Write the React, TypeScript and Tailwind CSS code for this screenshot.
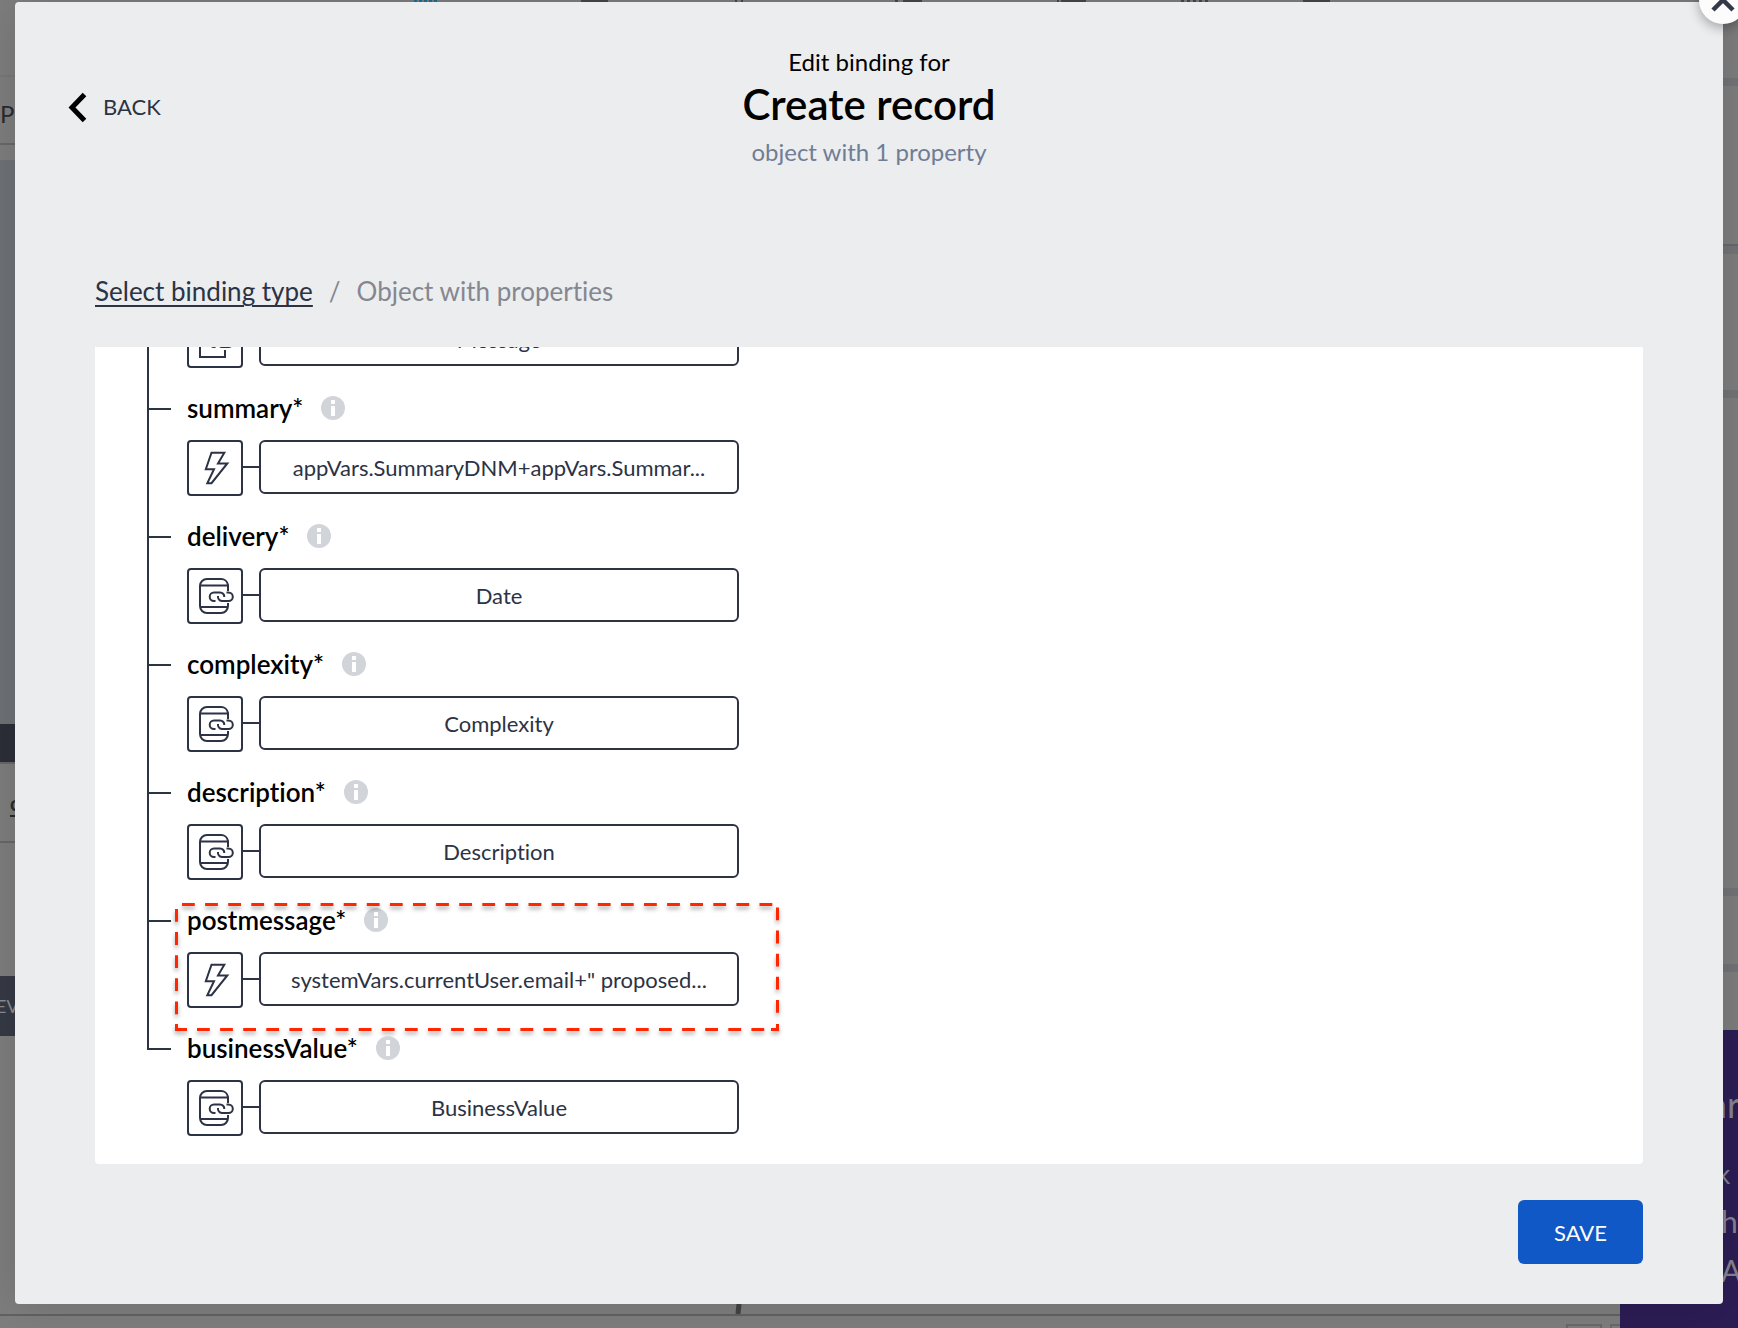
import React from "react";

type Kind = "formula" | "page" | "param";
type Row = { name: string; value: string; kind: Kind; highlighted?: boolean; continued?: boolean };

const rows: Row[] = [
  { name: "message", value: "Message", kind: "param", continued: true },
  { name: "summary", value: "appVars.SummaryDNM+appVars.Summar...", kind: "formula" },
  { name: "delivery", value: "Date", kind: "page" },
  { name: "complexity", value: "Complexity", kind: "page" },
  { name: "description", value: "Description", kind: "page" },
  { name: "postmessage", value: 'systemVars.currentUser.email+" proposed...', kind: "formula", highlighted: true },
  { name: "businessValue", value: "BusinessValue", kind: "page" },
];

function KindIcon({ kind }: { kind: Kind }) {
  return (
    <svg viewBox="0 0 56 56" className="size-14 shrink-0" fill="none" stroke="#2b3344" strokeWidth="2" aria-hidden="true">
      {kind === "formula" && <path d="M24.500 12.700H37.300L31 23.500H40.300L24.500 43.200H20.300L27 29.300H18.800Z" />}
      {kind === "page" && (
        <>
          <path d="M41 23V17a7 7 0 0 0-7-6H20a7 7 0 0 0-7 7v20a7 7 0 0 0 7 7h14a7 7 0 0 0 7-7v-3" />
          <path d="M13 17.500H41M13 39H41" />
          <path d="M28.500 33H27a4.300 4.300 0 0 1 0-8.600h6a4.300 4.300 0 0 1 4.300 4.600" />
          <path d="M31 28a4.500 4.500 0 0 0 3.800 5H41.500a4.300 4.300 0 0 0 0-8.600H39.500" />
        </>
      )}
      {kind === "param" && (
        <>
          <path d="M30 12H13V45H38V38" />
          <path d="M28.500 35H27a4.300 4.300 0 0 1 0-8.600h6a4.300 4.300 0 0 1 4.300 4.600" />
          <path d="M31 30a4.500 4.500 0 0 0 3.800 5H41.500a4.300 4.300 0 0 0 0-8.600H39.500" />
        </>
      )}
    </svg>
  );
}

function DashedFrame() {
  return (
    <svg
      viewBox="0 0 620 140"
      className="pointer-events-none absolute -left-[17px] top-3 h-[140px] w-[620px] drop-shadow-[0_3px_2px_rgba(0,0,0,0.35)]"
      fill="none"
      stroke="#ff2600"
      strokeWidth="3"
      strokeDasharray="12.800 10.300"
      aria-hidden="true"
    >
      <path d="M12 4.500H603" />
      <path d="M6.500 9V124" />
      <path d="M607.500 7.500V122" />
      <path d="M27 129.500H604" />
      <path d="M6.500 124V129.500H17M601 129.500H607.500V124" strokeDasharray="none" />
    </svg>
  );
}

function PropertyRow({ row, last }: { row: Row; last: boolean }) {
  return (
    <li className="flex shrink-0 gap-4">
      <div className="flex w-6 flex-col" aria-hidden="true">
        {!row.continued && <div className="h-[34px] border-b-2 border-l-2 border-[#2b3344]" />}
        {!last && <div className="flex-1 border-l-2 border-[#2b3344]" />}
      </div>
      <div className={last ? "relative" : "relative pb-2"}>
        {!row.continued && (
          <div className="flex h-16 items-center gap-[18px]">
            <span className="text-[26px] font-semibold text-black">{row.name}*</span>
            <button type="button" aria-label={"About " + row.name} className="size-6">
              <svg viewBox="0 0 24 24" className="size-6" aria-hidden="true">
                <circle cx="12" cy="12" r="12" fill="#d1d4d9" />
                <path d="M10 4h4v4h-4zM10 10H14V20H10z" fill="#fff" />
              </svg>
            </button>
          </div>
        )}
        <div className="flex items-start">
          <button
            type="button"
            aria-label={"Binding type of " + row.name}
            className="flex size-14 items-center justify-center rounded border-2 border-[#2b3344]"
          >
            <KindIcon kind={row.kind} />
          </button>
          <div className="mt-[26px] h-0.5 w-4 bg-[#2b3344]" />
          <button
            type="button"
            className="h-[54px] w-[480px] rounded-md border-2 border-[#2b3344] px-4 text-[22px] whitespace-nowrap text-[#2b3344]"
          >
            {row.value}
          </button>
        </div>
        {row.highlighted && <DashedFrame />}
      </div>
    </li>
  );
}

function Backdrop() {
  return (
    <div className="absolute inset-0 overflow-hidden bg-[#7e7e7f]" aria-hidden="true">
      <div className="flex h-full justify-between">
        <div className="flex w-10 flex-col text-2xl text-[#2a2a2c]">
          <div className="h-[77px] border-b-2 border-[#78787a]" />
          <div className="flex h-[68px] items-center border-b-2 border-[#68686a] pt-2">P</div>
          <div className="h-[15px]" />
          <div className="h-[564px] bg-[#6f7277]" />
          <div className="h-[38px] bg-[#2c2f38]" />
          <div className="flex h-[81px] items-center border-y-2 border-[#68686a] pl-[10px] text-xl font-bold underline underline-offset-4">
            on
          </div>
          <div className="h-[133px]" />
          <div className="flex h-[60px] items-center bg-[#363a45] text-lg text-[#8c8d92]">
            <span className="-ml-1">EV</span>
          </div>
        </div>
        <div className="flex w-10 flex-col">
          <div className="h-[78px]" />
          <div className="h-2 bg-[#727477]" />
          <div className="h-[160px] border-b-2 border-[#68696c]" />
          <div className="h-2 bg-[#727477]" />
          <div className="h-[136px]" />
          <div className="h-2 bg-[#727477]" />
          <div className="h-[490px]" />
          <div className="h-2 bg-[#727477]" />
          <div className="h-[68px]" />
          <div className="h-2 bg-[#727477]" />
        </div>
      </div>
      <svg viewBox="0 0 1738 2" className="absolute left-0 top-0 h-[2px] w-[1738px]">
        <path d="M414 1H438" stroke="#1f6e95" strokeWidth="2" strokeDasharray="3 2" />
        <path d="M581 1H608M735 1h2M741 1h2M895 1h3M903 1H922M1057 1h2M1061 1H1086M1303 1H1330" stroke="#474748" strokeWidth="2" />
        <path d="M1181 1H1208" stroke="#474748" strokeWidth="2" strokeDasharray="3 3" />
      </svg>
      <div className="absolute inset-x-0 bottom-0 flex h-6 flex-col">
        <svg viewBox="0 0 8 10" className="ml-[734px] h-[10px] w-2 shrink-0">
          <path d="M5 0L4 10" stroke="#434344" strokeWidth="5" />
        </svg>
        <div className="h-0.5 shrink-0 bg-[#626264]" />
        <div className="mt-2 flex shrink-0 justify-end gap-2 pr-[92px]">
          <div className="h-5 w-9 border-2 border-[#69696b]" />
          <div className="h-5 w-9 border-2 border-[#69696b]" />
        </div>
      </div>
      <div className="absolute bottom-0 right-0 flex h-[298px] w-[118px] flex-col items-start overflow-hidden bg-[#2c1d55] pl-[89px] pt-11 text-[#86848f]">
        <span className="text-4xl leading-[60px]">ar</span>
        <span className="pl-2 text-[26px] leading-[80px]">k</span>
        <span className="pl-3 text-3xl leading-[14px]">ht</span>
        <span className="pl-3 text-3xl leading-[84px]">A</span>
      </div>
    </div>
  );
}

export default function App() {
  return (
    <div className="relative flex h-screen flex-col overflow-hidden px-[15px] pb-6 pt-0.5 font-['Lato',sans-serif] [font-variant-ligatures:none]">
      <Backdrop />
      <main
        role="dialog"
        aria-labelledby="dialog-title"
        className="relative flex min-h-0 flex-1 flex-col rounded bg-[#ecedef] px-20 pb-10 shadow-[0_0_48px_rgba(0,0,0,0.15)]"
      >
        <button
          type="button"
          aria-label="Close"
          className="absolute -right-6 -top-[26px] flex size-12 items-center justify-center rounded-full bg-[#fcfcfd] shadow-[0_4px_12px_rgba(0,0,0,0.3)]"
        >
          <svg viewBox="0 0 24 24" className="size-6" aria-hidden="true">
            <path d="M2 2L22 22M22 2L2 22" stroke="#333949" strokeWidth="4.500" />
          </svg>
        </button>

        <header className="grid h-[257px] shrink-0 grid-cols-3 items-start pt-10">
          <button type="button" className="-ml-7 mt-12 flex items-center gap-4 justify-self-start text-[22px] text-[#2b3344]">
            <svg viewBox="0 0 20 32" className="h-8 w-5" fill="none" aria-hidden="true">
              <path d="M17.500 3.500L5 16.500L17.500 29.500" stroke="#000" strokeWidth="5" />
            </svg>
            BACK
          </button>
          <div className="flex flex-col items-center whitespace-nowrap text-2xl">
            <p className="leading-10 text-black">Edit binding for</p>
            <h1 id="dialog-title" className="text-[42px] font-semibold leading-[44px] text-black">
              Create record
            </h1>
            <p className="leading-[52px] text-[#6f7d95]">object with 1 property</p>
          </div>
        </header>

        <nav aria-label="Breadcrumb" className="flex h-[88px] shrink-0 items-start gap-4 pt-4 text-[26px] leading-8">
          <a href="#binding-type" className="text-[#2b3344] underline decoration-2 underline-offset-4">
            Select binding type
          </a>
          <span className="text-[#85878f]">/</span>
          <span className="text-[#85878f]">Object with properties</span>
        </nav>

        <section className="flex min-h-0 flex-1 flex-col justify-end overflow-hidden rounded-b bg-white pb-7 pl-[52px]">
          <ul className="flex flex-col">
            {rows.map((row, i) => (
              <PropertyRow key={row.name} row={row} last={i === rows.length - 1} />
            ))}
          </ul>
        </section>

        <footer className="mt-9 flex shrink-0 justify-end">
          <button type="button" className="h-16 w-[125px] rounded-md bg-[#1058c6] text-[22px] text-white">
            SAVE
          </button>
        </footer>
      </main>
    </div>
  );
}
